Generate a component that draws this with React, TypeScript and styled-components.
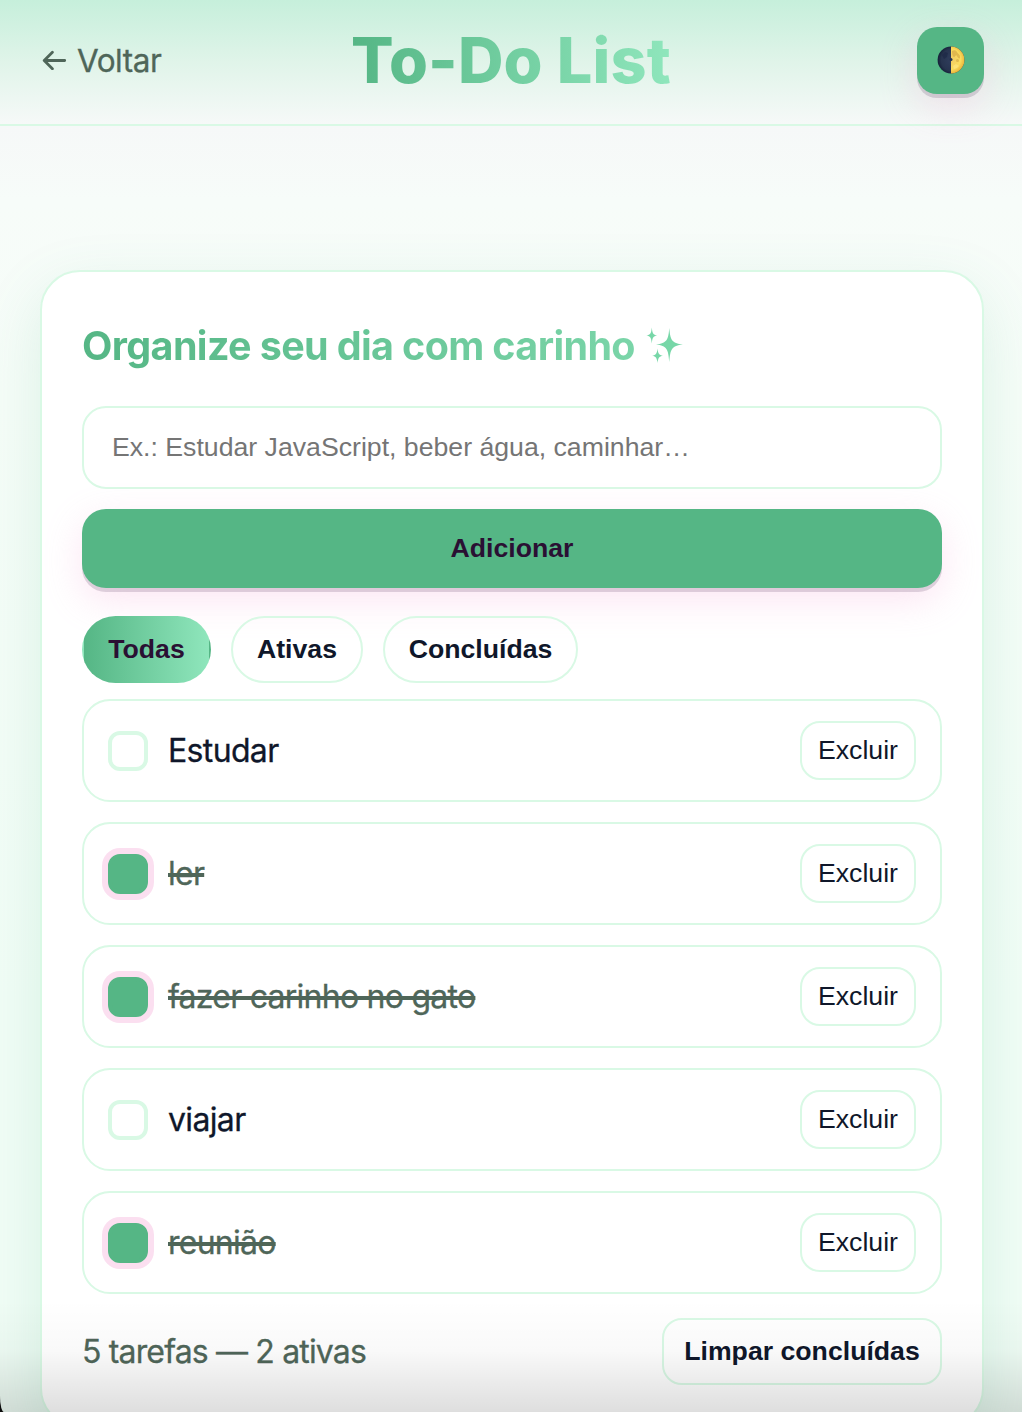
import React, { useState } from "react";
import styled, { createGlobalStyle, css } from "styled-components";

const c = {
  green: "#55b685",
  mint: "#8fe6bc",
  line: "#d9f9e5",
  ink: "#0f172a",
  muted: "#4f6659",
  plum: "#2a1033",
};

const GlobalStyle = createGlobalStyle`
  *, *::before, *::after { box-sizing: border-box; }
  html, body { margin: 0; height: 1412px; overflow: hidden; background: #0b0b0b; }
  button, input { font-family: "Liberation Sans", Arial, sans-serif; margin: 0; }
`;

const Page = styled.div`
  position: relative;
  height: 1412px;
  overflow: hidden;
  border-bottom-left-radius: 4px 16px;
  font-family: Inter, "Noto Sans", sans-serif;
  color: ${c.ink};
  background: linear-gradient(180deg, #f6f8f8 0, #f6f8f8 126px, #f7fcf9 200px, #f6fdf8 400px, #f1fdf6 1000px, #f1fdf6 100%);
`;

const Header = styled.header`
  display: grid;
  grid-template-columns: 1fr auto 1fr;
  align-items: center;
  height: 126px;
  padding: 0 38px 4px 42px;
  border-bottom: 2px solid ${c.line};
  background: linear-gradient(180deg, #c6efdb 0%, #e0f4e9 50%, #f6f9f8 100%);
`;

const Back = styled.a`
  display: flex;
  align-items: center;
  gap: 10px;
  font-size: 31.5px;
  letter-spacing: -0.45px;
  color: ${c.muted};
  text-decoration: none;
  -webkit-text-stroke: 0.3px ${c.muted};
`;

const gradientText = css`
  color: transparent;
  background-clip: text;
  -webkit-background-clip: text;
`;

const Title = styled.h1`
  margin: 0 4px 0 0;
  font-size: 63px;
  line-height: 78px;
  font-weight: 800;
  letter-spacing: 0.15px;
  background-image: linear-gradient(90deg, ${c.green}, ${c.mint});
  ${gradientText}
`;

const raised = css`
  border: 0;
  background: ${c.green};
  box-shadow: 0 4px 0 rgba(42, 16, 51, 0.15), 0 12px 36px rgba(244, 170, 216, 0.3);
`;

const ThemeButton = styled.button`
  ${raised}
  justify-self: end;
  display: grid;
  place-items: center;
  width: 67px;
  height: 67px;
  padding: 0;
  border-radius: 20px;
`;

const Card = styled.main`
  margin: 144px 38px 0 40px;
  padding: 40px;
  height: 1158px;
  border: 2px solid ${c.line};
  border-radius: 40px;
  background: #fff;
  box-shadow: 0 20px 60px rgba(70, 165, 130, 0.15);
`;

const Heading = styled.h2`
  display: flex;
  align-items: center;
  gap: 11px;
  width: 860px;
  height: 68px;
  margin: 0 0 26px;
  font-size: 39.5px;
  font-weight: 700;
  letter-spacing: -0.64px;
  white-space: nowrap;
  span {
    background-image: linear-gradient(90deg, ${c.green}, ${c.mint});
    background-size: 860px 100%;
    ${gradientText}
  }
`;

const Form = styled.form`
  display: grid;
  gap: 20px;
`;

const Field = styled.input`
  height: 83px;
  padding: 0 28px;
  border: 2px solid ${c.line};
  border-radius: 24px;
  font-size: 26.67px;
  background: #fff;
  &::placeholder { color: #757575; opacity: 1; }
`;

const AddButton = styled.button`
  ${raised}
  height: 79px;
  border-radius: 24px;
  padding: 0 0 1px;
  font-size: 26.67px;
  font-weight: 700;
  color: ${c.plum};
`;

const Filters = styled.div`
  display: flex;
  gap: 20px;
  margin: 28px 0 16px;
`;

const Pill = styled.button<{ $active: boolean; $width: number }>`
  width: ${(p) => p.$width}px;
  height: 67px;
  padding: 0;
  border: 2px solid ${(p) => (p.$active ? "transparent" : c.line)};
  border-radius: 34px;
  font-size: 26.67px;
  font-weight: 700;
  color: ${(p) => (p.$active ? c.plum : c.ink)};
  background: ${(p) => (p.$active ? `linear-gradient(90deg, ${c.green}, ${c.mint})` : "transparent")};
`;

const List = styled.ul`
  display: grid;
  gap: 20px;
  margin: 0;
  padding: 0;
  list-style: none;
`;

const Row = styled.li`
  display: flex;
  align-items: center;
  height: 103px;
  padding: 0 24px;
  border: 2px solid ${c.line};
  border-radius: 28px;
  background: #fff;
`;

const Check = styled.button<{ $on: boolean }>`
  width: 40px;
  height: 40px;
  padding: 0;
  border: 4px solid ${(p) => (p.$on ? c.green : c.line)};
  border-radius: 12px;
  background: ${(p) => (p.$on ? c.green : "#fff")};
  box-shadow: ${(p) => (p.$on ? "0 0 0 6px #fbdff0" : "none")};
`;

const Label = styled.span<{ $done: boolean }>`
  margin-left: 20px;
  margin-right: auto;
  font-size: 32px;
  letter-spacing: ${(p) => (p.$done ? -0.75 : -0.65)}px;
  color: ${(p) => (p.$done ? c.muted : c.ink)};
  text-decoration: ${(p) => (p.$done ? "line-through 4px" : "none")};
  -webkit-text-stroke: 0.3px currentColor;
`;

const Outline = styled.button<{ $strong?: boolean }>`
  width: ${(p) => (p.$strong ? 280 : 116)}px;
  height: ${(p) => (p.$strong ? 67 : 59)}px;
  padding: 0;
  border: 2px solid ${c.line};
  border-radius: 20px;
  background: transparent;
  font-size: 26.67px;
  font-weight: ${(p) => (p.$strong ? 700 : 400)};
  color: ${c.ink};
`;

const Footer = styled.footer`
  display: flex;
  align-items: center;
  justify-content: space-between;
  margin-top: 24px;
`;

const Count = styled.span`
  font-size: 32px;
  letter-spacing: -0.84px;
  color: ${c.muted};
  -webkit-text-stroke: 0.3px currentColor;
`;

const BottomShade = styled.div`
  position: absolute;
  inset: auto 0 0 0;
  height: 112px;
  pointer-events: none;
  background: linear-gradient(180deg, rgba(0, 0, 0, 0), rgba(0, 0, 0, 0.025) 45%, rgba(0, 0, 0, 0.13));
`;

const Arrow = () => (
  <svg width="25" height="20" viewBox="0 0 25 20" fill="none" stroke={c.muted} strokeWidth="2.8" strokeLinecap="round" strokeLinejoin="round">
    <path d="M22.700 10.500H2.700M10.400 2.300L2.200 10.500l8.200 8.200" />
  </svg>
);

const Moon = () => (
  <svg width="28" height="28" viewBox="0 0 28 28">
    <defs>
      <radialGradient id="lit" gradientUnits="userSpaceOnUse" cx="13" cy="13" r="15">
        <stop offset="0" stopColor="#efca66" />
        <stop offset="0.7" stopColor="#fbdc5e" />
        <stop offset="1" stopColor="#e8b238" />
      </radialGradient>
      <radialGradient id="dark" cx="55%" cy="50%" r="55%">
        <stop offset="0" stopColor="#303e5d" />
        <stop offset="0.75" stopColor="#27344f" />
        <stop offset="1" stopColor="#152038" />
      </radialGradient>
    </defs>
    <circle cx="14" cy="14" r="13.4" fill="url(#dark)" />
    <path d="M14 .6a13.4 13.4 0 0 1 0 26.8Z" fill="url(#lit)" />
    <path d="M15 5c2-1 4-1 5 1s3 2 3 5-2 1-3-1-2 1-3 1-2-3-2-6Z" fill="#c99a3c" opacity=".5" />
    <circle cx="20.500" cy="14.500" r="1.500" fill="#c99a3c" opacity=".5" />
    <circle cx="14" cy="13.500" r="1.500" fill="#27344f" />
    <path d="M16 20l3-2 3 2-2 2-3 1Z" fill="#ffe788" opacity=".6" />
    <path d="M5 9l3-3 3 1-1 4-3 2Z" fill="#1b2744" opacity=".6" />
  </svg>
);

const Sparkles = () => (
  <svg width="38" height="38" viewBox="0 0 38 38" fill="#77d7a8">
    <path d="M23.300 1C24.300 12.500 25.500 16.500 37 17.500 25.500 18.500 24.300 22.500 23.300 35 22.300 22.500 21 18.500 10 17.500 21 16.500 22.300 12.500 23.300 1Z" />
    <path d="M5.800 .5C6.400 6.500 7.200 7.800 11.200 8.500 7.200 9.200 6.400 10.500 5.800 16.500 5.200 10.500 4.400 9.200.4 8.500 4.400 7.800 5.200 6.500 5.800 .5Z" />
    <path d="M11.500 21.500C12.100 26.500 12.900 28 17 28.700 12.900 29.400 12.100 31 11.500 36 10.900 31 10.100 29.400 6.200 28.700 10.100 28 10.900 26.500 11.500 21.500Z" />
  </svg>
);

type Filter = "Todas" | "Ativas" | "Concluídas";
const filters: { name: Filter; width: number }[] = [
  { name: "Todas", width: 129 },
  { name: "Ativas", width: 132 },
  { name: "Concluídas", width: 195 },
];

const initial = [
  { id: 1, text: "Estudar", done: false },
  { id: 2, text: "ler", done: true },
  { id: 3, text: "fazer carinho no gato", done: true },
  { id: 4, text: "viajar", done: false },
  { id: 5, text: "reunião", done: true },
];

export default function App() {
  const [tasks, setTasks] = useState(initial);
  const [filter, setFilter] = useState<Filter>("Todas");
  const [draft, setDraft] = useState("");

  const visible = tasks.filter((t) => filter === "Todas" || (filter === "Ativas") === !t.done);
  const active = tasks.filter((t) => !t.done).length;

  const add = (e: React.FormEvent) => {
    e.preventDefault();
    if (!draft.trim()) return;
    setTasks([...tasks, { id: Date.now(), text: draft.trim(), done: false }]);
    setDraft("");
  };

  return (
    <>
      <GlobalStyle />
      <Page>
        <Header>
          <Back href="#"><Arrow />Voltar</Back>
          <Title>To-Do List</Title>
          <ThemeButton aria-label="Alternar tema"><Moon /></ThemeButton>
        </Header>
        <Card>
          <Heading><span>Organize seu dia com carinho</span><Sparkles /></Heading>
          <Form onSubmit={add}>
            <Field value={draft} onChange={(e) => setDraft(e.target.value)} placeholder="Ex.: Estudar JavaScript, beber água, caminhar…" />
            <AddButton type="submit">Adicionar</AddButton>
          </Form>
          <Filters>
            {filters.map((f) => (
              <Pill key={f.name} $width={f.width} $active={f.name === filter} onClick={() => setFilter(f.name)}>{f.name}</Pill>
            ))}
          </Filters>
          <List>
            {visible.map((t) => (
              <Row key={t.id}>
                <Check
                  $on={t.done}
                  aria-label={t.text}
                  onClick={() => setTasks(tasks.map((x) => (x.id === t.id ? { ...x, done: !x.done } : x)))}
                />
                <Label $done={t.done}>{t.text}</Label>
                <Outline onClick={() => setTasks(tasks.filter((x) => x.id !== t.id))}>Excluir</Outline>
              </Row>
            ))}
          </List>
          <Footer>
            <Count>{`${tasks.length} tarefas — ${active} ativas`}</Count>
            <Outline $strong onClick={() => setTasks(tasks.filter((t) => !t.done))}>Limpar concluídas</Outline>
          </Footer>
        </Card>
        <BottomShade />
      </Page>
    </>
  );
}
